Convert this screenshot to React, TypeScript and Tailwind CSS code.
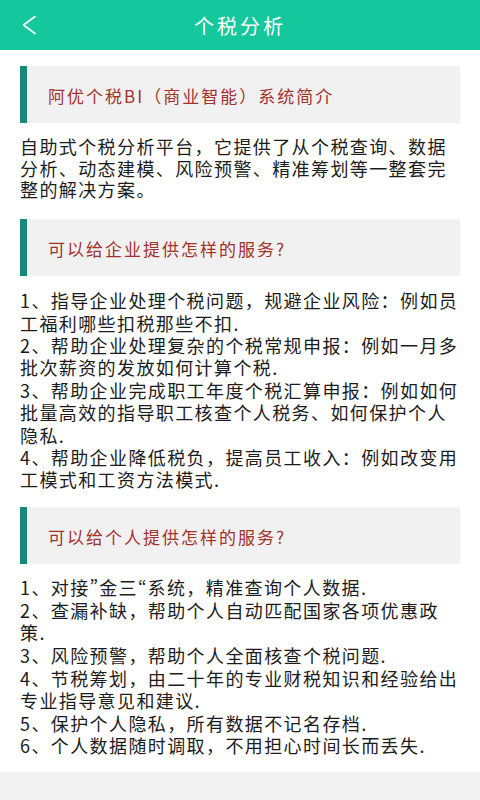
import React from "react";

function SectionTitle({ children, className = "" }: { children: React.ReactNode; className?: string }) {
  return (
    <div
      className={`h-[57px] bg-[#f1f1f1] border-l-[7px] border-[#17887a] pl-[21px] flex items-center ${className}`}
    >
      <h2 className="text-[17px] leading-[20px] tracking-[2px] text-[#a3322c] font-normal pt-[2px]">
        {children}
      </h2>
    </div>
  );
}

const bizItems = [
  "1、指导企业处理个税问题，规避企业风险：例如员工福利哪些扣税那些不扣.",
  "2、帮助企业处理复杂的个税常规申报：例如一月多批次薪资的发放如何计算个税.",
  "3、帮助企业完成职工年度个税汇算申报：例如如何批量高效的指导职工核查个人税务、如何保护个人隐私.",
  "4、帮助企业降低税负，提高员工收入：例如改变用工模式和工资方法模式.",
];

const Q = ({ c }: { c: string }) => <span className="[font-feature-settings:'pwid'] tracking-[1px]">{c}</span>;

const personItems: React.ReactNode[] = [
  <>
    1、对接<Q c="”" />金三<Q c="“" />系统，精准查询个人数据.
  </>,
  "2、查漏补缺，帮助个人自动匹配国家各项优惠政策.",
  "3、风险预警，帮助个人全面核查个税问题.",
  "4、节税筹划，由二十年的专业财税知识和经验给出专业指导意见和建议.",
  "5、保护个人隐私，所有数据不记名存档.",
  "6、个人数据随时调取，不用担心时间长而丢失.",
];

export default function App() {
  return (
    <div className="w-[480px] h-[800px] overflow-hidden bg-white flex flex-col font-['Noto_Sans_CJK_SC','Noto_Sans',sans-serif] text-[#1c1c1c]">
      <header className="h-[50px] shrink-0 bg-[#14c79c] grid grid-cols-[60px_1fr_60px] items-center">
        <div className="flex items-center pl-[21px]">
          <svg width="16" height="20" viewBox="0 0 16 20" fill="none">
            <path d="M14 1.5 L2.5 10 L14 18.5" stroke="white" strokeWidth="1.6" strokeLinecap="round" strokeLinejoin="round" />
          </svg>
        </div>
        <h1 className="text-center text-white text-[20px] leading-[24px] tracking-[3px] font-normal pt-[2px]">
          个税分析
        </h1>
        <div />
      </header>

      <main className="px-5 flex flex-col">
        <SectionTitle className="mt-4">阿优个税BI（商业智能）系统简介</SectionTitle>
        <p className="mt-[13px] text-[18px] leading-[21.7px] tracking-[1.4px]">
          自助式个税分析平台，它提供了从个税查询、数据分析、动态建模、风险预警、精准筹划等一整套完整的解决方案。
        </p>

        <SectionTitle className="mt-[18px]">可以给企业提供怎样的服务?</SectionTitle>
        <div className="mt-[13px] text-[18px] leading-[22.4px] tracking-[1.4px]">
          {bizItems.map((t) => (
            <p key={t}>{t}</p>
          ))}
        </div>

        <SectionTitle className="mt-[16.5px]">可以给个人提供怎样的服务?</SectionTitle>
        <div className="mt-[12px] text-[18px] leading-[22.6px] tracking-[1.4px]">
          {personItems.map((t, i) => (
            <p key={i}>{t}</p>
          ))}
        </div>
      </main>

      <div className="mt-[15px] flex-1 bg-[#f2f2f2]" />
    </div>
  );
}
